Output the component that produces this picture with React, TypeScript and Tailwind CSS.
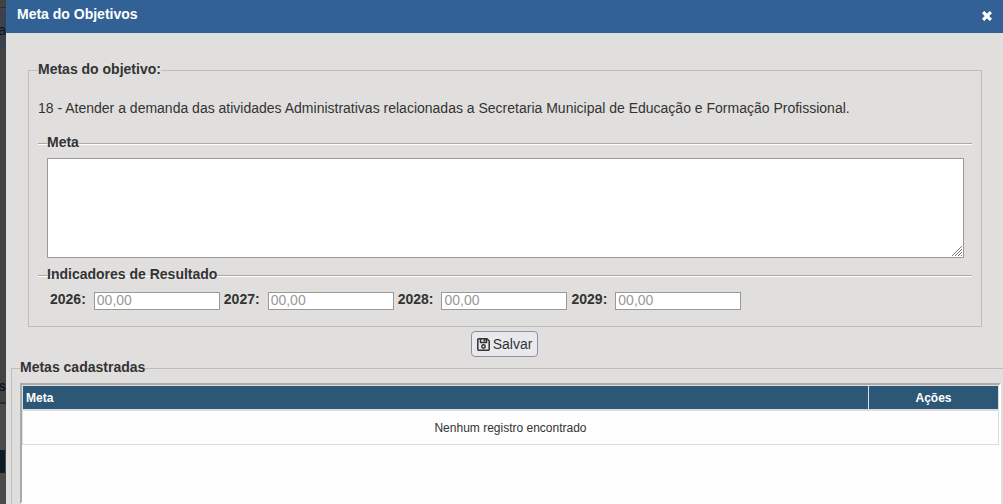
import React, { useState } from "react";

const YEARS = ["2026", "2027", "2028", "2029"];

function SaveIcon() {
  return (
    <svg
      viewBox="0 0 13 13"
      className="h-[13px] w-[13px]"
      fill="none"
      stroke="currentColor"
      strokeWidth="1.5"
      strokeLinejoin="round"
      aria-hidden
    >
      <path d="M1.5.8H10L12.2 3v8.5a.7.7 0 0 1-.7.7h-10a.7.7 0 0 1-.7-.7v-10a.7.7 0 0 1 .7-.7Z" />
      <path d="M3.5 1v3.5h6V1" />
      <path d="M7.5 1v2.5" strokeWidth="1.8" />
      <circle cx="6.5" cy="8.5" r="1.7" />
    </svg>
  );
}

function CloseIcon() {
  return (
    <svg viewBox="0 0 10 10" className="h-[10px] w-[10px]" aria-hidden>
      <path
        d="M2.2 2.2 7.8 7.8M7.8 2.2 2.2 7.8"
        stroke="currentColor"
        strokeWidth="3.2"
        strokeLinecap="square"
      />
    </svg>
  );
}

// Resize grip laid over the corner of the textarea
function Grip() {
  return (
    <svg
      viewBox="0 0 12 12"
      className="pointer-events-none absolute right-px bottom-px h-3 w-3 bg-white"
      fill="none"
      stroke="#777"
      strokeWidth="1"
      aria-hidden
    >
      <path d="M1 11 11 1M4 11l7-7M7 11l4-4M10 11l1-1" />
    </svg>
  );
}

// Sliver of the dimmed page that stays visible beside the dialog
function Backdrop() {
  return (
    <div
      className="flex w-[6px] shrink-0 flex-col overflow-hidden bg-[#424242] text-sm text-[#0d1522]"
      aria-hidden
    >
      <div className="h-[7px]" />
      <div className="h-px bg-[#2e2e2e]" />
      <div className="mt-[3px] flex h-[37px] items-center justify-end bg-[#39414d] leading-5">
        a
      </div>
      <div className="mt-[328px] flex h-5 justify-end font-bold leading-5">s</div>
      <div className="mt-[6px] h-[2px] bg-[#2c2c2c]" />
      <div className="h-[46px] bg-[#4b4b4b]" />
      <div className="h-[23px] border-r border-[#4b4b4b] bg-[#0d1b25]" />
      <div className="flex-1 bg-[#4b4b4b]" />
    </div>
  );
}

function Section({
  title,
  children,
}: {
  title: string;
  children: React.ReactNode;
}) {
  return (
    <fieldset className="min-w-0 border-t border-[#a9a9a9] pr-2 pl-[9px] shadow-[inset_0_1px_0_#fff]">
      <legend className="pb-[2px] font-bold leading-5">{title}</legend>
      {children}
    </fieldset>
  );
}

export default function App() {
  const [meta, setMeta] = useState("");
  const [values, setValues] = useState<Record<string, string>>({});

  return (
    <div className="flex h-screen overflow-hidden font-['Liberation_Sans',Arial,sans-serif] text-sm text-[#333]">
      <Backdrop />

      <div
        role="dialog"
        aria-labelledby="dialog-title"
        className="flex min-w-0 flex-1 flex-col bg-[#e0dfdd]"
      >
        <header className="flex h-[33px] shrink-0 items-center justify-between bg-[#326195] px-[11px] pb-[6px] text-white">
          <h1 id="dialog-title" className="font-bold leading-5">
            Meta do Objetivos
          </h1>
          <button type="button" aria-label="Fechar" className="pt-[5px]">
            <CloseIcon />
          </button>
        </header>

        <form
          className="flex min-h-0 flex-1 flex-col pt-[26px]"
          onSubmit={(e) => e.preventDefault()}
        >
          <fieldset className="mr-[21px] ml-[22px] min-w-0 border border-[#bdbdbd] px-[9px] pb-4">
            <legend className="pb-[2px] font-bold leading-5">
              Metas do objetivo:
            </legend>
            <p className="mt-[17px] mb-[14px] leading-5">
              18 - Atender a demanda das atividades Administrativas relacionadas
              a Secretaria Municipal de Educação e Formação Profissional.
            </p>

            <Section title="Meta">
              <div className="relative mt-1">
                <textarea
                  aria-label="Meta"
                  value={meta}
                  onChange={(e) => setMeta(e.target.value)}
                  className="block h-[100px] w-full border border-[#999] bg-white p-[2px]"
                />
                <Grip />
              </div>
            </Section>

            <div className="h-[6px]" />

            <Section title="Indicadores de Resultado">
              <div className="mt-[3px] flex flex-wrap gap-1 pl-[3px]">
                {YEARS.map((y) => (
                  <label key={y} className="flex gap-2 font-bold leading-5">
                    {y}:
                    <input
                      type="text"
                      placeholder="00,00"
                      value={values[y] ?? ""}
                      onChange={(e) =>
                        setValues({ ...values, [y]: e.target.value })
                      }
                      className="mt-[3px] h-[18px] w-[126px] border border-[#999] bg-white px-[2px] pb-[3px] font-normal leading-4 placeholder:text-[#999]"
                    />
                  </label>
                ))}
              </div>
            </Section>
          </fieldset>

          <div className="mt-1 flex shrink-0 justify-center">
            <button
              type="submit"
              className="flex h-[26px] items-center gap-[3px] rounded-[4px] border border-[#8f8f9d] bg-[#e9e9ed] px-[5px]"
            >
              <SaveIcon />
              Salvar
            </button>
          </div>

          <fieldset className="ml-[5px] flex min-h-0 min-w-0 flex-1 flex-col border-t border-l border-[#bdbdbd] pr-[2px] pl-2">
            <legend className="pb-[2px] font-bold leading-5">
              Metas cadastradas
            </legend>
            <div className="mt-1 h-screen border-2 border-t-[#a9a9a9] border-r-white border-b-white border-l-[#a9a9a9] bg-[#fefefe]">
              <table className="w-full border-collapse text-xs">
                <thead>
                  <tr className="h-6 bg-[#2c5777] text-white">
                    <th className="border border-[#ddd] px-[3px] pt-[2px] text-left">
                      Meta
                    </th>
                    <th className="w-[130px] border border-[#ddd] px-[3px] pt-[2px]">
                      Ações
                    </th>
                  </tr>
                </thead>
                <tbody>
                  <tr className="h-[35px]">
                    <td
                      colSpan={2}
                      className="border border-t-2 border-[#ddd] pt-[2px] text-center"
                    >
                      Nenhum registro encontrado
                    </td>
                  </tr>
                </tbody>
              </table>
            </div>
          </fieldset>
        </form>
      </div>
    </div>
  );
}
